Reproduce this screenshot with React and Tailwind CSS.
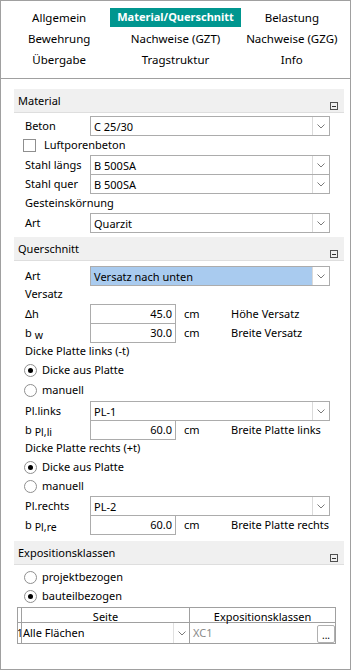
import React from "react";

const Chev = () => (
  <svg width="8" height="5" viewBox="0 0 8 5" className="block">
    <polyline points="0.5,0.5 4,4 7.5,0.5" fill="none" stroke="#7a7a7a" strokeWidth="1" />
  </svg>
);

const Dropdown = ({ value, hl }) => (
  <div className="flex h-[20px] w-[240px] shrink-0 border border-[#acacac] bg-white">
    <div className={`flex flex-1 items-center pl-[3px] leading-none ${hl ? "bg-[#a9cbef]" : ""}`}>{value}</div>
    <div className="flex w-[17px] items-center justify-center border-l border-[#dadada]">
      <Chev />
    </div>
  </div>
);

const Header = ({ title }) => (
  <div className="flex h-[24px] items-start justify-between border-b border-[#dedede] bg-[#f0f0f0] pl-[4px] pr-[6px]">
    <span className="pt-[3px] leading-[18px]">{title}</span>
    <div className="mt-[13px] flex h-[8px] w-[8px] items-center justify-center border border-[#505050]">
      <div className="h-px w-[4px] bg-[#303030]" />
    </div>
  </div>
);

const Label = ({ children }) => (
  <div className="flex h-[20px] w-[65px] shrink-0 items-center">{children}</div>
);

const Row = ({ h = "h-[19px]", children }) => <div className={`flex ${h} items-start pl-[11px]`}>{children}</div>;

const TextRow = ({ h, children }) => (
  <Row h={h}>
    <div className="flex h-full items-center">{children}</div>
  </Row>
);

const Radio = ({ checked, label, h }) => (
  <div className={`flex ${h || "h-[19px]"} items-center pl-[10px]`}>
    <div className="flex h-[13px] w-[13px] items-center justify-center rounded-full border border-[#8f8f8f] bg-white">
      {checked && <div className="h-[5px] w-[5px] rounded-full bg-black" />}
    </div>
    <span className="ml-[5px]">{label}</span>
  </div>
);

const NumRow = ({ label, value, desc }) => (
  <Row>
    <Label>{label}</Label>
    <div className="flex h-[20px] w-[86px] shrink-0 items-center justify-end border border-[#acacac] bg-white pr-[3px]">{value}</div>
    <div className="flex h-[20px] w-[55px] shrink-0 items-center pl-[8px]">cm</div>
    <div className="flex h-[20px] items-center whitespace-nowrap">{desc}</div>
  </Row>
);

const Sub = ({ base, sub }) => (
  <span className="flex items-start">
    <span>{base}</span>
    <span className="ml-[3px] mt-[5px] text-[10.5px] leading-none">{sub}</span>
  </span>
);

export default function App() {
  return (
    <div className="flex h-[670px] w-[351px] flex-col border border-[#a0a0a0] bg-white text-[11px] text-black font-['Noto_Sans',sans-serif]">
      <div className="grid h-[78px] shrink-0 grid-cols-3 content-start justify-items-center border-b border-[#a0a0a0] pt-[6px] text-[11.5px]">
        {[
          "Allgemein",
          "Material/Querschnitt",
          "Belastung",
          "Bewehrung",
          "Nachweise (GZT)",
          "Nachweise (GZG)",
          "Übergabe",
          "Tragstruktur",
          "Info",
        ].map((t) => (
          <div key={t} className="flex h-[21px] items-center">
            {t === "Material/Querschnitt" ? (
              <span className="flex h-[19px] items-center whitespace-nowrap bg-[#00968f] px-[7px] text-[11px] font-bold text-white">{t}</span>
            ) : (
              <span className="whitespace-nowrap">{t}</span>
            )}
          </div>
        ))}
      </div>

      <div className="flex flex-1 flex-col pl-[13px] pr-[6px] pt-[10px]">
        <Header title="Material" />
        <div className="mt-[3px] flex flex-col">
          <Row h="h-[20px]">
            <Label>Beton</Label>
            <Dropdown value="C 25/30" />
          </Row>
          <div className="flex h-[19px] items-center pl-[9px]">
            <div className="h-[13px] w-[13px] border border-[#8f8f8f] bg-white" />
            <span className="ml-[8px]">Luftporenbeton</span>
          </div>
          <Row>
            <Label>Stahl längs</Label>
            <Dropdown value="B 500SA" />
          </Row>
          <Row>
            <Label>Stahl quer</Label>
            <Dropdown value="B 500SA" />
          </Row>
          <TextRow h="h-[20px]">Gesteinskörnung</TextRow>
          <Row>
            <Label>Art</Label>
            <Dropdown value="Quarzit" />
          </Row>
        </div>

        <div className="mt-[5px]">
          <Header title="Querschnitt" />
        </div>
        <div className="mt-[5px] flex flex-col">
          <Row>
            <Label>Art</Label>
            <Dropdown value="Versatz nach unten" hl />
          </Row>
          <TextRow>Versatz</TextRow>
          <NumRow label="Δh" value="45.0" desc="Höhe Versatz" />
          <NumRow label={<Sub base="b" sub="w" />} value="30.0" desc="Breite Versatz" />
          <TextRow>Dicke Platte links (-t)</TextRow>
          <Radio checked label="Dicke aus Platte" />
          <Radio label="manuell" h="h-[21px]" />
          <Row>
            <Label>Pl.links</Label>
            <Dropdown value="PL-1" />
          </Row>
          <NumRow label={<Sub base="b" sub="Pl,li" />} value="60.0" desc="Breite Platte links" />
          <TextRow>Dicke Platte rechts (+t)</TextRow>
          <Radio checked label="Dicke aus Platte" />
          <Radio label="manuell" />
          <Row>
            <Label>Pl.rechts</Label>
            <Dropdown value="PL-2" />
          </Row>
          <NumRow label={<Sub base="b" sub="Pl,re" />} value="60.0" desc="Breite Platte rechts" />
        </div>

        <div className="mt-[7px]">
          <Header title="Expositionsklassen" />
        </div>
        <div className="mt-[2px] flex flex-col">
          <Radio label="projektbezogen" h="h-[20px]" />
          <Radio checked label="bauteilbezogen" />
        </div>
        <div className="ml-[3px] mt-[1px] w-[319px] border-l border-t border-[#a0a0a0]">
          <div className="flex h-[15px] border-b border-[#a0a0a0]">
            <div className="w-[4px] border-r border-[#a0a0a0]" />
            <div className="flex w-[168px] items-center justify-center border-r border-[#a0a0a0] pt-[2px] leading-none">Seite</div>
            <div className="flex flex-1 items-center justify-center border-r border-[#a0a0a0] pt-[2px] leading-none">Expositionsklassen</div>
          </div>
          <div className="flex h-[21px] border-b border-[#a0a0a0]">
            <div className="w-[4px] overflow-hidden border-r border-[#a0a0a0] text-[10px] leading-[20px]">
              <span className="-ml-[1px]">1</span>
            </div>
            <div className="flex w-[168px] border-r border-[#a0a0a0]">
              <div className="flex flex-1 items-center pl-[1px]">Alle Flächen</div>
              <div className="flex w-[16px] items-center justify-center border-l border-[#e0e0e0]">
                <Chev />
              </div>
            </div>
            <div className="flex flex-1 items-center justify-between border-r border-[#a0a0a0] pl-[3px]">
              <span className="text-[#8a8a8a]">XC1</span>
              <div className="mt-[2px] flex h-[18px] w-[18px] items-end justify-center rounded-[2px] border border-[#b0b0b0] bg-white pb-[2px] text-[10px] leading-none">...</div>
            </div>
          </div>
        </div>
      </div>
    </div>
  );
}
